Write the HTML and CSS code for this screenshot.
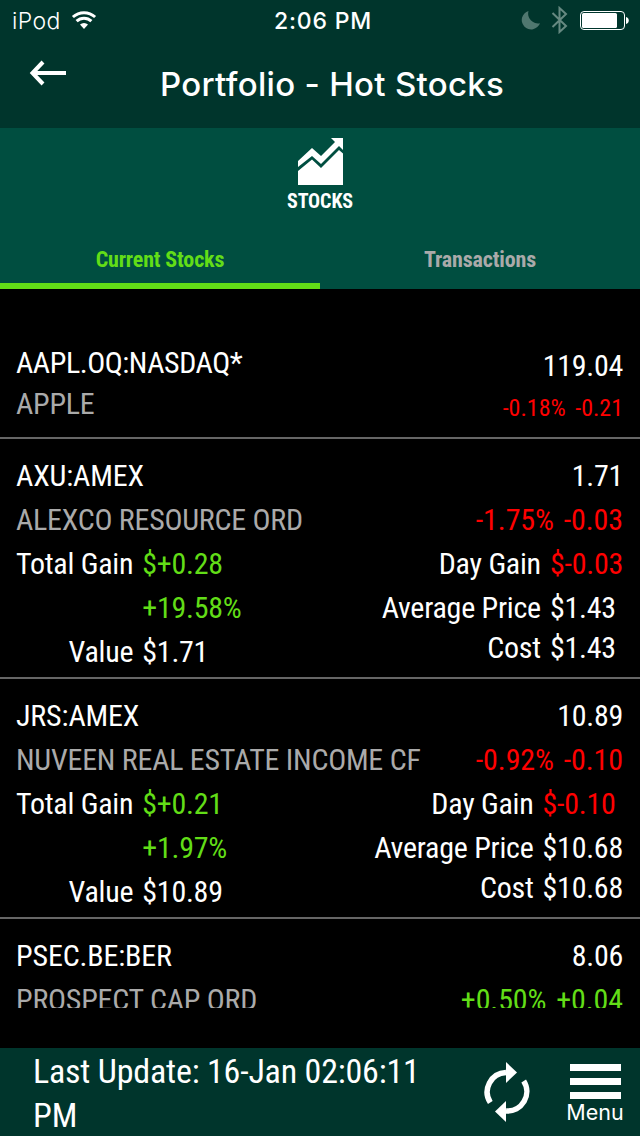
FILE: index.html
```
<!DOCTYPE html>
<html lang="en">
<head>
    <meta charset="UTF-8">
    <meta name="viewport" content="width=device-width, initial-scale=1.0">
    <title>Portfolio - Hot Stocks</title>
    <link rel="stylesheet" href="styles.css">
</head>
<body>
    <div class="status-bar">
        <div class="carrier">
            <span>iPod</span>
            <svg class="wifi" width="26" height="20" viewBox="0 0 26 20">
                <path d="M13 19 L9 14.6 A6 6 0 0 1 17 14.6 Z" fill="#fff"/>
                <path d="M5.6 11.2 A10.8 10.8 0 0 1 20.4 11.2" fill="none" stroke="#fff" stroke-width="3"/>
                <path d="M1.9 7 A16.5 16.5 0 0 1 24.1 7" fill="none" stroke="#fff" stroke-width="3"/>
            </svg>
        </div>
        <div class="clock">2:06 PM</div>
        <div class="indicators">
            <svg width="20" height="20" viewBox="0 0 20 20">
                <path d="M7.5 1 A9.4 9.4 0 1 0 19 13.2 A9.8 9.8 0 0 1 7.5 1 Z" fill="#4f776f"/>
            </svg>
            <svg class="bluetooth" width="18" height="28" viewBox="0 0 18 28">
                <path d="M1.5 7 L15 20 L8.5 26 V2 L15 8 L1.5 21" fill="none" stroke="#668981" stroke-width="2"/>
            </svg>
            <svg class="battery" width="50" height="20" viewBox="0 0 50 20">
                <rect x="0.5" y="0.5" width="44" height="18" rx="3.5" fill="none" stroke="#fff" stroke-width="1"/>
                <rect x="2" y="2" width="35" height="15" rx="1.5" fill="#fff"/>
                <path d="M46 6 A3.6 3.6 0 0 1 46 13 Z" fill="#fff"/>
            </svg>
        </div>
    </div>

    <div class="header">
        <a class="back" href="#">
            <svg width="38" height="26" viewBox="0 0 38 26">
                <path d="M14 2 L3.5 13 L14 24 M3 13 H37" fill="none" stroke="#fff" stroke-width="4"/>
            </svg>
        </a>
        <h1>Portfolio - Hot Stocks</h1>
    </div>

    <div class="section">
        <svg class="chart-icon" width="46" height="49" viewBox="0 0 46 49">
            <path d="M0 24 L14 11 L23 19 L37 5 L33 1 H45 V13 L41 9 L23 27 L14 19 L0 30 Z" fill="#fff"/>
            <path d="M0 34 L14 22.5 L23 31 L41 13 L45 16.5 V48 H0 Z" fill="#fff"/>
        </svg>
        <div class="section-name">STOCKS</div>
    </div>

    <div class="tabs">
        <div class="tab active">Current Stocks</div>
        <div class="tab">Transactions</div>
    </div>

    <div class="viewport">
        <div class="stock-list">
            <div class="stock compact">
                <div class="left">
                    <div class="symbol">AAPL.OQ:NASDAQ*</div>
                    <div class="company">APPLE</div>
                </div>
                <div class="right">
                    <div class="price">119.04</div>
                    <div class="change down">-0.18% -0.21</div>
                </div>
            </div>

            <div class="stock">
                <div class="left">
                    <div class="symbol">AXU:AMEX</div>
                    <div class="company">ALEXCO RESOURCE ORD</div>
                    <div class="details">
                        <span class="label">Total Gain</span><span class="up">$+0.28</span>
                        <span class="label"></span><span class="up">+19.58%</span>
                        <span class="label">Value</span><span>$1.71</span>
                    </div>
                </div>
                <div class="right">
                    <div class="price">1.71</div>
                    <div class="change down">-1.75% -0.03</div>
                    <div class="details">
                        <span class="label">Day Gain</span><span class="down">$-0.03</span>
                        <span class="label">Average Price</span><span>$1.43</span>
                        <span class="label cost">Cost</span><span class="cost">$1.43</span>
                    </div>
                </div>
            </div>

            <div class="stock">
                <div class="left">
                    <div class="symbol">JRS:AMEX</div>
                    <div class="company">NUVEEN REAL ESTATE INCOME CF</div>
                    <div class="details">
                        <span class="label">Total Gain</span><span class="up">$+0.21</span>
                        <span class="label"></span><span class="up">+1.97%</span>
                        <span class="label">Value</span><span>$10.89</span>
                    </div>
                </div>
                <div class="right">
                    <div class="price">10.89</div>
                    <div class="change down">-0.92% -0.10</div>
                    <div class="details">
                        <span class="label">Day Gain</span><span class="down">$-0.10</span>
                        <span class="label">Average Price</span><span>$10.68</span>
                        <span class="label cost">Cost</span><span class="cost">$10.68</span>
                    </div>
                </div>
            </div>

            <div class="stock">
                <div class="left">
                    <div class="symbol">PSEC.BE:BER</div>
                    <div class="company">PROSPECT CAP ORD</div>
                </div>
                <div class="right">
                    <div class="price">8.06</div>
                    <div class="change up">+0.50% +0.04</div>
                </div>
            </div>
        </div>
    </div>

    <div class="footer">
        <div class="last-update">Last Update: 16-Jan 02:06:11<br>PM</div>
        <svg class="refresh" width="46" height="60" viewBox="0 0 46 60">
            <path d="M6.3 40.5 A19.5 19.5 0 0 1 22 10.5" fill="none" stroke="#fff" stroke-width="5.5"/>
            <path d="M22 0 L33 10.5 L22 21 Z" fill="#fff"/>
            <path d="M39.7 19 A19.5 19.5 0 0 1 22 49" fill="none" stroke="#fff" stroke-width="5.5"/>
            <path d="M22 39 L11 49.5 L22 60 Z" fill="#fff"/>
        </svg>
        <div class="menu">
            <div class="bar"></div>
            <div class="bar"></div>
            <div class="bar"></div>
            <span>Menu</span>
        </div>
    </div>
</body>
</html>
```
FILE: styles.css
```
* {
    margin: 0;
    padding: 0;
    box-sizing: border-box;
}

body {
    width: 640px;
    height: 1136px;
    background: #000;
    color: #fff;
    font-family: 'Roboto Condensed', Roboto, sans-serif;
    font-stretch: 75%;
    overflow: hidden;
}

svg {
    display: block;
}

.status-bar {
    display: grid;
    grid-template-columns: 1fr auto 1fr;
    height: 40px;
    padding: 0 10px 0 12px;
    background: #00352c;
    font-family: Inter, sans-serif;
    font-size: 23px;
    line-height: 42px;
}

.carrier {
    display: flex;
    font-weight: 300;
    letter-spacing: 0.4px;
}

.wifi {
    margin: 10px 0 0 10px;
}

.clock {
    padding-left: 4px;
    font-weight: 500;
    letter-spacing: 0.8px;
}

.indicators {
    display: flex;
    justify-content: flex-end;
}

.indicators svg {
    margin-top: 10px;
}

.indicators .bluetooth {
    margin: 6px 11px 0 10px;
}

.indicators .battery {
    margin-top: 11px;
}

.header {
    display: flex;
    height: 88px;
    background: #00352c;
}

.back {
    width: 160px;
    padding: 20px 0 0 29px;
}

.header h1 {
    font-family: Inter, sans-serif;
    font-size: 33px;
    font-weight: 500;
    letter-spacing: 0.3px;
    line-height: 88px;
    white-space: nowrap;
}

.section {
    height: 102px;
    padding-top: 9px;
    background: #004e40;
}

.chart-icon {
    margin: 0 auto;
    padding-left: 1px;
    width: 47px;
}

.section-name {
    font-size: 20px;
    font-weight: 700;
    letter-spacing: -0.1px;
    line-height: 30px;
    text-align: center;
}

.tabs {
    display: flex;
    height: 59px;
    background: #004e40;
}

.tab {
    flex: 1;
    color: #aaa;
    font-size: 22px;
    font-weight: 700;
    letter-spacing: -0.15px;
    line-height: 60px;
    text-align: center;
}

.tab.active {
    color: #62dd17;
    border-bottom: 6px solid #62dd17;
}

.viewport {
    height: 719px;
    overflow: hidden;
}

.stock {
    display: flex;
    justify-content: space-between;
    height: 240px;
    padding: 15px 17px 0 16px;
    border-bottom: 2px solid #666;
    font-size: 30px;
    letter-spacing: -0.25px;
    line-height: 44px;
    white-space: nowrap;
}

.stock.compact {
    height: 150px;
    padding-top: 53px;
}

.compact .left {
    line-height: 41px;
}

.left {
    min-width: 0;
}

.right {
    flex: none;
    letter-spacing: -0.15px;
    text-align: right;
}

.change {
    word-spacing: 3px;
    letter-spacing: -0.1px;
}

.price {
    letter-spacing: -0.3px;
}

.compact .price {
    padding-top: 2px;
}

.compact .change {
    font-size: 24px;
    line-height: 40px;
    word-spacing: 4px;
    letter-spacing: 0;
}

.symbol {
    letter-spacing: -0.15px;
}

.compact .symbol {
    letter-spacing: -0.45px;
}

.company {
    color: #aaa;
}

.up {
    color: #62dd17;
}

.down {
    color: #f00;
}

.details {
    display: grid;
    grid-template-columns: auto auto;
    column-gap: 9px;
    text-align: left;
}

.left .details {
    justify-content: start;
}

.right .details {
    justify-content: end;
    letter-spacing: -0.25px;
}

.label {
    text-align: right;
}

.cost {
    line-height: 36px;
}

.footer {
    display: flex;
    height: 88px;
    margin-top: 40px;
    padding-left: 33px;
    background: #00352c;
}

.last-update {
    width: 451px;
    font-size: 34px;
    letter-spacing: -0.2px;
    line-height: 44px;
    padding-top: 1px;
}

.refresh {
    margin-top: 14px;
}

.menu {
    width: 58px;
    margin-left: 36px;
    padding-top: 16px;
    text-align: center;
    font-family: Inter, sans-serif;
    font-size: 21.5px;
    line-height: 26px;
}

.bar {
    width: 51px;
    height: 7px;
    margin: 0 auto 7px 4px;
    background: #fff;
}

.menu span {
    display: block;
    margin-top: -7px;
}
```
